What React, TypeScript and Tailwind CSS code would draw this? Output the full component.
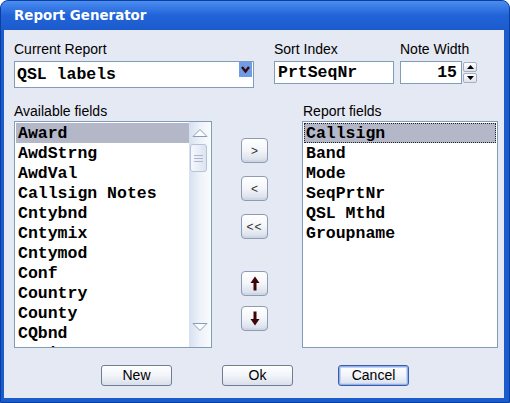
const available = [
  "Award",
  "AwdStrng",
  "AwdVal",
  "Callsign Notes",
  "Cntybnd",
  "Cntymix",
  "Cntymod",
  "Conf",
  "Country",
  "County",
  "CQbnd",
  "CQmix",
];

const report = ["Callsign", "Band", "Mode", "SeqPrtNr", "QSL Mthd", "Groupname"];

const sans = "font-['Liberation_Sans',Arial,sans-serif]";
const mono = "font-['Liberation_Mono',monospace] font-bold text-[16.5px] text-black";

const Label = ({ children }: { children: React.ReactNode }) => (
  <div className={`${sans} h-[16px] text-[14px] leading-[16px] text-black whitespace-nowrap`}>{children}</div>
);

const MidButton = ({ children }: { children: React.ReactNode }) => (
  <div className="w-[27px] h-[25px] rounded-[4px] border border-[#8e9bb3] bg-linear-to-b from-white via-[#f3f5f9] to-[#d5dce8] flex items-center justify-center shadow-[inset_0_-2px_0_#cfd7e4]">
    {children}
  </div>
);

const DialogButton = ({ children, focused }: { children: React.ReactNode; focused?: boolean }) => (
  <button
    className={
      focused
        ? `${sans} block w-[71px] h-[21px] rounded-[3px] border border-[#3d5ea6] bg-linear-to-b from-white via-[#f1f4f9] to-[#d9dee9] text-[14px] leading-[19px] text-black shadow-[inset_0_0_0_1px_#8fb0ec,inset_0_0_0_2px_#c4d6f5]`
        : `${sans} block w-[71px] h-[21px] rounded-[3px] border border-[#707d95] bg-linear-to-b from-white via-[#f1f4f9] to-[#d9dee9] text-[14px] leading-[19px] text-black`
    }
  >
    {children}
  </button>
);

const Arrow = ({ down }: { down?: boolean }) => (
  <svg width="10" height="15" viewBox="0 0 10 15" className={down ? "rotate-180" : ""}>
    <path d="M5 0.5 L9.5 7 L6.5 7 L6.5 14.5 L3.5 14.5 L3.5 7 L0.5 7 Z" fill="#3d0508" />
  </svg>
);

const ScrollTri = ({ down }: { down?: boolean }) => (
  <svg width="16" height="10" viewBox="0 0 16 10">
    {down ? (
      <path d="M1 1.5 L15 1.5 L8 8.5 Z" fill="#fbfcfe" stroke="#8d9cb6" strokeWidth="1" />
    ) : (
      <path d="M8 1.5 L15 8.5 L1 8.5 Z" fill="#fbfcfe" stroke="#8d9cb6" strokeWidth="1" />
    )}
  </svg>
);

export default function App() {
  return (
    <div className="w-[510px] h-[403px] bg-white">
      <div className="w-[510px] h-[403px] rounded-t-[8px] border border-[#0b3f9e] bg-[#1c5bcd] flex flex-col overflow-hidden">
        {/* title bar */}
        <div className="h-[29px] shrink-0 bg-linear-to-b from-[#4b8df0] via-[#2163d8] to-[#1c5bcd] flex items-center pl-[13px] pt-[2px]">
          <span className="font-['DejaVu_Sans',sans-serif] font-bold text-[13.4px] text-white">Report Generator</span>
        </div>

        {/* client */}
        <div className="ml-[3px] mr-[5px] mb-[4px] flex-1 bg-[#e5e9f4] pl-[10px] pt-[11px] flex flex-col">
          {/* top row */}
          <div className="flex items-start">
            <div className="w-[240px]">
              <Label>Current Report</Label>
              <div className="mt-[4px] h-[27px] border border-[#7f9db9] bg-white flex items-start">
                <div className={`${mono} flex-1 pl-[2px] h-[25px] leading-[25px]`}>QSL labels</div>
                <div className="mr-[1px] w-[13px] h-[15px] bg-[#6e9de6] flex items-center justify-center">
                  <svg width="9" height="7" viewBox="0 0 9 7">
                    <path d="M1 1 L4.5 5.5 L8 1" fill="none" stroke="#3a0a12" strokeWidth="2.4" />
                  </svg>
                </div>
              </div>
            </div>
            <div className="ml-[20px] w-[120px]">
              <Label>Sort Index</Label>
              <div className={`${mono} mt-[4px] h-[23px] border border-[#7f9db9] bg-white pl-[3px] leading-[21px]`}>PrtSeqNr</div>
            </div>
            <div className="ml-[6px]">
              <Label>Note Width</Label>
              <div className="mt-[4px] flex items-start">
                <div className={`${mono} w-[62px] h-[23px] border border-[#7f9db9] bg-white pr-[4px] text-right leading-[21px]`}>15</div>
                <div className="ml-[1px] mt-[1px] w-[14px] flex flex-col gap-[1px]">
                  <div className="h-[10px] rounded-[2px] border border-[#a4afc2] bg-linear-to-b from-white to-[#dde2ec] flex items-center justify-center">
                    <svg width="7" height="4" viewBox="0 0 7 4">
                      <path d="M3.5 0 L7 4 L0 4 Z" fill="#000" />
                    </svg>
                  </div>
                  <div className="h-[10px] rounded-[2px] border border-[#a4afc2] bg-linear-to-b from-white to-[#dde2ec] flex items-center justify-center">
                    <svg width="7" height="4" viewBox="0 0 7 4">
                      <path d="M0 0 L7 0 L3.5 4 Z" fill="#000" />
                    </svg>
                  </div>
                </div>
              </div>
            </div>
          </div>

          {/* lists row */}
          <div className="mt-[15px] flex items-start">
            <div className="w-[198px]">
              <Label>Available fields</Label>
              <div className="mt-[2px] h-[227px] border border-[#7f9db9] bg-white flex overflow-hidden">
                <div className="flex-1 pl-[1px] pt-[1px]">
                  {available.map((f, i) => (
                    <div
                      key={f}
                      className={
                        i === 0
                          ? `${mono} h-[20px] leading-[22px] pl-[2px] bg-[#b3b7c7] whitespace-pre`
                          : `${mono} h-[20px] leading-[22px] pl-[2px] whitespace-pre`
                      }
                    >
                      {f}
                    </div>
                  ))}
                </div>
                <div className="w-[22px] h-full bg-linear-to-r from-[#d6e0f0] via-[#eef2f9] to-[#fafbfd] flex flex-col items-center">
                  <div className="h-[17px] flex items-end pb-[1px]">
                    <ScrollTri />
                  </div>
                  <div className="mt-[5px] ml-[-3px] w-[17px] h-[28px] rounded-[3px] border border-[#b5c2d8] bg-linear-to-r from-[#f6f8fc] to-[#dce4f1] flex flex-col items-center justify-center gap-[2px]">
                    <div className="w-[9px] h-[1px] bg-[#aab7cd]" />
                    <div className="w-[9px] h-[1px] bg-[#aab7cd]" />
                    <div className="w-[9px] h-[1px] bg-[#aab7cd]" />
                  </div>
                  <div className="flex-1" />
                  <div className="h-[17px] flex items-start mb-[8px]">
                    <ScrollTri down />
                  </div>
                </div>
              </div>
            </div>

            <div className="ml-[29px] w-[27px] pt-[35px] flex flex-col">
              <MidButton>
                <span className={`${sans} text-[12px] text-[#333]`}>&gt;</span>
              </MidButton>
              <div className="mt-[13px]">
                <MidButton>
                  <span className={`${sans} text-[12px] text-[#333]`}>&lt;</span>
                </MidButton>
              </div>
              <div className="mt-[13px]">
                <MidButton>
                  <span className={`${sans} text-[12px] text-[#333] tracking-[1px]`}>&lt;&lt;</span>
                </MidButton>
              </div>
              <div className="mt-[32px]">
                <MidButton>
                  <Arrow />
                </MidButton>
              </div>
              <div className="mt-[10px]">
                <MidButton>
                  <Arrow down />
                </MidButton>
              </div>
            </div>

            <div className="ml-[34px] w-[196px]">
              <div className="pl-[1px]">
                <Label>Report fields</Label>
              </div>
              <div className="mt-[2px] h-[227px] border border-[#7f9db9] bg-white pl-[1px] pr-[1px] pt-[1px]">
                {report.map((f, i) => (
                  <div
                    key={f}
                    className={
                      i === 0
                        ? `${mono} h-[20px] leading-[20px] pl-[1px] bg-[#b3b7c7] border border-dotted border-[#222] whitespace-pre`
                        : `${mono} h-[20px] leading-[22px] pl-[2px] whitespace-pre`
                    }
                  >
                    {f}
                  </div>
                ))}
              </div>
            </div>
          </div>

          {/* bottom buttons */}
          <div className="mt-[17px] flex items-start pl-[87px]">
            <DialogButton>New</DialogButton>
            <div className="ml-[50px]">
              <DialogButton>Ok</DialogButton>
            </div>
            <div className="ml-[45px]">
              <DialogButton focused>Cancel</DialogButton>
            </div>
          </div>
        </div>
      </div>
    </div>
  );
}
